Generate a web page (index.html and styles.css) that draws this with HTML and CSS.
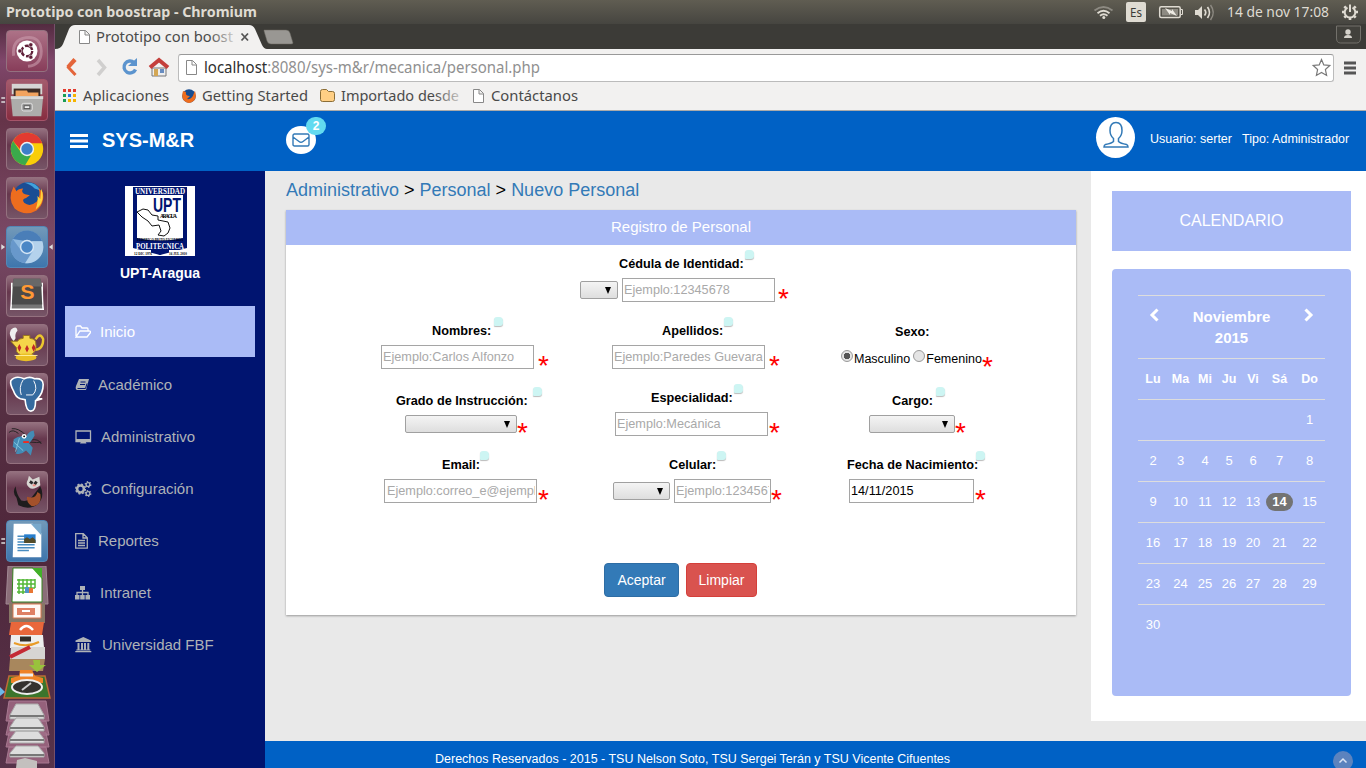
FILE: index.html
```html
<!DOCTYPE html>
<html lang="es">
<head>
<meta charset="utf-8">
<title>Prototipo con boostrap</title>
<link rel="stylesheet" href="styles.css">
</head>
<body>
<header class="topbar">
  <svg class="ui bold" width="260" height="24"><text x="6" y="17" textLength="251" lengthAdjust="spacingAndGlyphs">Prototipo con boostrap - Chromium</text></svg>
  <svg class="tray" width="276" height="24" viewBox="1090 0 276 24">
    <g fill="none" stroke-width="1.8"><path d="M1094.5 10.5q9-7 18 0" stroke="#8d8a82"/><path d="M1097.5 13.2q6-5 12 0M1100 15.8q3.700-3 7.500 0" stroke="#dfdbd2"/></g><circle cx="1103.800" cy="17.500" r="1.500" fill="#dfdbd2"/>
    <rect x="1126" y="2" width="20" height="20" rx="2" fill="#dfdbd2"/><text x="1130" y="17" font-size="13" fill="#3c3b37" textLength="12" lengthAdjust="spacingAndGlyphs">Es</text>
    <rect x="1159.700" y="6.700" width="20.500" height="10.800" rx="1.500" fill="none" stroke="#dfdbd2" stroke-width="1.500"/><path d="M1181 9.500h1.500v5h-1.500" fill="none" stroke="#dfdbd2"/><rect x="1162" y="9" width="16" height="6.500" fill="#8d8a82"/><path d="M1165 8l7 3v-2l5 7-7-3v2z" fill="#eeebe4"/>
    <path d="M1195 10h3l4-4v13l-4-4h-3z" fill="#dfdbd2"/><path d="M1204.500 9.500q2.500 3 0 6M1207.500 7q4 5.500 0 11" fill="none" stroke="#dfdbd2" stroke-width="1.700"/><path d="M1210.500 5q5.500 7.500 0 15" fill="none" stroke="#8d8a82" stroke-width="1.500"/>
    <text x="1227" y="17" fill="#dfdbd2" font-size="15" textLength="102" lengthAdjust="spacingAndGlyphs">14 de nov 17:08</text>
    <g stroke="#dfdbd2" fill="none" stroke-width="2"><path d="M1347.500 7.600a5.300 5.300 0 1 0 5 0M1350 4.500v7.500"/><path d="M1350 17.500v2.500M1342 12h2.500M1355.500 12h2.500M1344.300 6.300l1.800 1.800M1355.700 6.300l-1.800 1.800M1344.300 17.700l1.800-1.800M1355.700 17.700l-1.800-1.800" stroke-width="2.600"/></g>
  </svg>
</header>
<div class="desktop">
<aside class="launcher">
  <svg class="tile wine" viewBox="0 0 42 42"><path d="M7 26Q5 9 20 7t16 14q0 15-14 16" stroke="#c99bab" stroke-width="3" fill="none" opacity=".6"/><circle cx="21" cy="21" r="11" fill="#fff"/><circle cx="21" cy="21" r="5.500" stroke="#5f1f38" stroke-width="2.500" fill="none" stroke-dasharray="9.500 2"/><g fill="#5f1f38" stroke="#fff" stroke-width=".6"><circle cx="13.500" cy="21" r="2.200"/><circle cx="25" cy="14.500" r="2.200"/><circle cx="25" cy="27.500" r="2.200"/></g></svg>
  <svg class="tile red" viewBox="0 0 42 42"><path d="M5 4h32v11H5z" fill="#d6d6d4"/><path d="M7 9h28v8H7z" fill="#3d2c25"/><path d="M9 11h12l1 2h11v5H9z" fill="#f2a35e"/><path d="M4 17h34l-2 21H6z" fill="#adadab"/><path d="M4 17h34v3H4z" fill="#d9d9d7"/><rect x="15.500" y="24.500" width="11" height="8" rx="2" fill="#999" stroke="#e6e6e6"/><rect x="18" y="27" width="6" height="3" fill="#eee" stroke="#555"/><path d="M-6 19h4M-6 23h4" stroke="#ddd" stroke-width="1.600"/></svg>
  <svg class="tile" viewBox="0 0 42 42"><circle cx="21" cy="21" r="17" fill="#f9cd09"/><path d="M6.300 12.500A17 17 0 0 1 37 15H21l-5 9z" fill="#e23a31"/><path d="M6.300 12.500L15 25l10 3-6 10A17 17 0 0 1 6.300 12.500z" fill="#3baa4b"/><circle cx="21" cy="21" r="7.500" fill="#eef3f5"/><circle cx="21" cy="21" r="6" fill="#3d7fc8"/></svg>
  <svg class="tile" viewBox="0 0 42 42"><circle cx="22" cy="20" r="15.500" fill="#1b4d94"/><path d="M18 5q12-2 17 8l-6-2q-5-5-11-6z" fill="#41a2dc"/><path d="M36 10q6 15-5 24-12 7-23-2-8-10-1-23l3 5q2-3 7-3-3 4 2 6l5 1-4 3q-5 1-2 5 6 5 13-1 5-6 2-15l5 6z" fill="#ed6d1e"/><path d="M36 11q5 14-6 22 3-8 2-14l3 3z" fill="#ffd33d"/></svg>
  <svg class="tile blue" viewBox="0 0 42 42"><circle cx="21" cy="21" r="17" fill="#8eb8df"/><path d="M6 12.500A17 17 0 0 1 37 15H21z" fill="#4a7eb8"/><path d="M6 12.500L15 25l10 3-6 10A17 17 0 0 1 6 12.500z" fill="#6898cb"/><path d="M26 15h11a17 17 0 0 1-18 23l8-12z" fill="#b4d2ec"/><circle cx="21" cy="21" r="7.500" fill="#d5e6f5"/><circle cx="21" cy="21" r="6" fill="#4b87c6"/><path d="M-6 18l4 3-4 3zM48 18l-4 3 4 3z" fill="#ddd"/></svg>
  <svg class="tile" viewBox="0 0 42 42"><path d="M5 7q0 20-1 28h34Q37 27 37 7" fill="#777" stroke="#fff" stroke-width="1.600"/><path d="M7 3h28l2 27H5z" fill="#4b4b4b"/><path d="M7 3h28l2 8H6z" fill="#686868"/><text x="14" y="24" font-family="Liberation Sans" font-weight="bold" font-size="21" fill="#ff9934" textLength="15" lengthAdjust="spacingAndGlyphs">S</text></svg>
  <svg class="tile" viewBox="0 0 42 42"><path d="M7 17Q1 11 4 5q6-5 7 1-3 3-2 8z" fill="#eee"/><path d="M30 15q5-8 8 0 0 11-9 11" fill="none" stroke="#ebc62e" stroke-width="2.500"/><path d="M4 17h7q2-3 6-3V11h7v3q4 0 6 3 3 14-9 15Q8 32 10 24z" fill="#f5d54a" stroke="#99771b"/><ellipse cx="20" cy="34" rx="11" ry="4" fill="#eabf25"/><path d="M8 32h24" stroke="#fff1a0"/><g fill="#c12727"><path d="M13 20l2 4-2 4-2-4zM21 21l2 4-2 4-2-4zM28 20l2 4-2 4-2-4z"/></g></svg>
  <svg class="tile" viewBox="0 0 42 42"><path d="M4 7q5-6 14-2 6-3 11 0 9-1 9 6 0 9-6 15h5l-7 2q0 11-5 11t-6-12l-5-1q-5-2-7-8-4-7-3-11z" fill="#356b9f" stroke="#fff" stroke-width="1.700"/><path d="M17 6q-5 8-2 16M28 7q5 9-1 15h-7" fill="none" stroke="#fff"/></svg>
  <svg class="tile" viewBox="0 0 42 42"><path d="M12 11Q6 6 2 10M20 13Q12 5 5 6M25 18q8-2 11 4M24 20q8 1 12 0" fill="none" stroke="#222"/><path d="M7 17q7-5 13-2 2-6 8-7l1 5q-4 7-6 8l4 5-2 8-5-5q-5 5-11 3l2-4-5-3q1-6 1-8z" fill="#438bb5"/><path d="M13 16l-4 14M7 20l10 9" stroke="#83c6df"/><circle cx="18" cy="14" r="2.500" fill="#fff"/><circle cx="18" cy="14" r="1" fill="#000"/><path d="M17 20h6" stroke="#ed2c22" stroke-width="2"/></svg>
  <svg class="tile" viewBox="0 0 42 42"><path d="M9 15q-4 7 1 12l2 8q12 6 21-2 7-8 2-18l-7 9q-5 8-13 6-5-6-6-15z" fill="#1e1c1d"/><path d="M21 26q9 3 11-5l3 2q2 12-9 13-6-4-5-10z" fill="#a4512b"/><path d="M23 4l4 4 7-3 1 9q-8 6-12 2-4-3-1-8z" fill="#d8d6d2"/><path d="M24 10l3 2M31 10l-2 3" stroke="#292929" stroke-width="3"/><path d="M27 14h3" stroke="#ef8a80" stroke-width="2"/></svg>
  <svg class="tile blue" viewBox="0 0 42 42"><path d="M7 3h20l9 10v25H6z" fill="#fff"/><path d="M25 3h11v12z" fill="#79a9cc"/><path d="M11 16h8M11 19h8M11 22h8M11 25h18M11 28h18M11 31h12" stroke="#488cc0" stroke-width="1.500"/><path d="M18 14h12v9H18z" fill="#287ecc"/><path d="M18 23v-4l3-2 3 2 3-2 3 3v3z" fill="#554c29"/><path d="M-6 19h4M-6 23h4" stroke="#ddd" stroke-width="1.600"/></svg>
  <svg class="stack" viewBox="0 566 55 202">
    <path d="M8 566h38l2 38H6z" fill="#8b6e79" stroke="#a28994"/><path d="M13 568h20l9 10v24H12z" fill="#fff" stroke="#37811e"/><path d="M32 568h10v11z" fill="#43b02a"/><g stroke="#54b838" stroke-width="1.500"><path d="M17 580h18M17 584h18M17 588h18M17 592h8M19 579v15M23 579v15M27 579v11M31 579v9M35 579v9"/></g><path d="M25 593v-6h4v6z" fill="#5293c7"/><path d="M29 593v-5h4v5z" fill="#e87735"/>
    <path d="M9 603h36v20H9z" fill="#876"/><path d="M13 604h28v14H13z" fill="#fff8f4" stroke="#d77950"/><path d="M17 608h18v7H17z" fill="#df8064"/><path d="M22 611h8" stroke="#fff" stroke-width="2"/>
    <path d="M11 622h33l-2 13H9z" fill="#e9673b"/><path d="M20 630q6-8 13 0" stroke="#fff" fill="none" stroke-width="2.500"/><path d="M11 635h32l1 13H10z" fill="#eee"/><path d="M20 639h11" stroke="#332d29" stroke-width="5"/><path d="M14 643q13 5 25-1" stroke="#e99b28" stroke-width="2" fill="none"/>
    <path d="M11 647h34v12H10z" fill="#d7d5d2"/><path d="M10 657l20-10" stroke="#c42a34" stroke-width="4"/><path d="M10 659h35l-2 12H9z" fill="#a8875d"/><path d="M33 660h7v5h6l-9 7-8-7h5z" fill="#99c23c"/>
    <path d="M9 676h36l5 22H4z" fill="#3b752c" stroke="#bd6c35" stroke-width="1.500"/><path d="M20 670h12l3 6 8 2v5H11v-5l8-2z" fill="#ef8326"/><path d="M20 675h13" stroke="#eee" stroke-width="3"/><ellipse cx="27" cy="687" rx="15" ry="7" fill="#34312e" stroke="#eee" stroke-width="2"/><path d="M22 690l9-7" stroke="#ccc" stroke-width="2"/><path d="M0 687l5 5-5 4z" fill="#6db9e8"/>
    <g stroke="#aaa"><path d="M9 701h37l3 20H6zM9 721h37l3 14H6zM9 733h37l3 14H6zM9 747h37l3 16H6z" fill="#95617b" stroke="#a87991"/><path d="M16 704h22l6 11v4H10v-4z" fill="#d7d7d7"/><path d="M16 718h22l6 9v4H10v-4zM16 731h22l6 8v4H10v-4zM16 746h22l6 7v4H10v-4z" fill="#ddd"/></g><path d="M10 716h34M10 728h34M10 740h34M10 755h34" stroke="#777" stroke-width="2"/><path d="M17 760l8-2 12 3v7H16z" fill="#c3c0be"/>
  </svg>
</aside>
<main class="browser">
  <div class="tabs">
    <svg class="ui tab" width="245" height="25" viewBox="55 24 245 25"><path d="M55 49q6 0 8-5l6-15q2-4 6-4h174q4 0 6 4l7 16q2 4 5 4z" fill="#f2f1f0"/><path d="M79.500 30.500h6l4 4v9h-10z M85 30.500v4.500h4.500" fill="#fff" stroke="#888"/><text x="96" y="42" fill="url(#f)" textLength="137" lengthAdjust="spacingAndGlyphs">Prototipo con boost</text><path d="M241.500 33.500l6.500 7M248 33.500l-6.500 7" stroke="#555" stroke-width="1.800"/><path d="M264 30h22q3 0 4 3l3 10q0 1-2 1h-20q-3 0-4-3l-3-10z" fill="#999793" stroke="#69675f" stroke-width=".5"/><defs><linearGradient id="f" gradientUnits="userSpaceOnUse" x1="96" x2="237" y1="0" y2="0"><stop offset=".8" stop-color="#494949"/><stop offset="1" stop-color="#e2e1e0"/></linearGradient></defs></svg>
    <svg width="28" height="25" viewBox="1336 24 28 25"><path d="M1336.500 26v12q0 5 4 5h16q4 0 4-5V26z" fill="#42413c" stroke="#73716b"/><circle cx="1348" cy="32" r="2.700" fill="#d6d3cc"/><path d="M1344 38q0-3 4-3t4 3z" fill="#d6d3cc"/></svg>
  </div>
  <div class="toolbar">
    <svg class="nav" width="123" height="37" viewBox="55 49 123 37"><path d="M75.500 60l-7 7.500 7 7.500M74.500 59l-7 8" fill="none" stroke="#e4653a" stroke-width="3"/><path d="M98 60l6.500 7.500-6.500 7.500" fill="none" stroke="#d0cfce" stroke-width="3.500"/><path d="M134 62.500a6 6 0 1 0 1.500 7" fill="none" stroke="#5c94ce" stroke-width="3.400"/><path d="M137 58v8h-9z" fill="#5c94ce"/><path d="M152 68h14v8h-14z" fill="#eee" stroke="#777"/><path d="M150 67.500l9-7.500 9 7.500" fill="none" stroke="#c43f3b" stroke-width="4"/><path d="M154 69h4v7h-4z" fill="#d3a653"/><path d="M160 69h4v4h-4z" fill="#678cc0"/></svg>
    <div class="url"><svg class="ui urltext" width="420" height="26" viewBox="179 55 420 26"><path d="M186.500 60.500h6l4 4v10h-10z M192 60.500v4.500h4.500" fill="#fff" stroke="#888"/><text x="204" y="73" textLength="336" lengthAdjust="spacingAndGlyphs"><tspan fill="#2e2e2e">localhost</tspan><tspan fill="#909090">:8080/sys-m&amp;r/mecanica/personal.php</tspan></text></svg>
    <svg width="22" height="26" viewBox="0 0 22 26"><path d="M10.500 4.500l2.300 5.400 6 .6-4.400 4 1.200 5.900-5.100-3-5.100 3 1.200-5.900-4.400-4 6-.6z" fill="#fff" stroke="#777" stroke-width="1.200"/></svg></div>
    <svg width="14" height="14" class="burger"><path d="M1 2h12M1 7h12M1 12h12" stroke="#555" stroke-width="2.800"/></svg>
  </div>
  <div class="bookmarks">
    <svg class="ui" width="560" height="24" viewBox="55 86 560 24"><g fill="#e33b2e"><path d="M63 89h3v3h-3zM68 89h3v3h-3zM73 89h3v3h-3z"/></g><path d="M63 94h3v3h-3zM63 99h3v3h-3z" fill="#1a9d55"/><path d="M68 94h3v3h-3z" fill="#2c77e5"/><path d="M73 94h3v3h-3zM68 99h3v3h-3zM73 99h3v3h-3z" fill="#f5b400"/>
    <text x="83" y="101" textLength="86" lengthAdjust="spacingAndGlyphs">Aplicaciones</text><circle cx="189" cy="96" r="6.800" fill="#174d91"/><path d="M183 91l3 1q-1 4 4 4l-3 3q5 1 7-6l1-2q3 10-6 12-9-2-6-12z" fill="#ee6c1d"/><text x="202" y="101" textLength="106" lengthAdjust="spacingAndGlyphs">Getting Started</text><path d="M320.500 91.500q0-2 2-2h4l2 2h4q2 0 2 2v6q0 2-2 2h-10q-2 0-2-2z" fill="#ffcf84" stroke="#8b6d36"/><text x="341" y="101" fill="url(#g)" textLength="118" lengthAdjust="spacingAndGlyphs">Importado desde</text><path d="M473.500 89.500h6l4 4v9h-10z M479 89.500v4.500h4.500" fill="#fff" stroke="#888"/><text x="491" y="101" textLength="87" lengthAdjust="spacingAndGlyphs">Contáctanos</text><defs><linearGradient id="g" gradientUnits="userSpaceOnUse" x1="341" x2="465" y1="0" y2="0"><stop offset=".75" stop-color="#494949"/><stop offset="1" stop-color="#e2e1e0"/></linearGradient></defs></svg>
  </div>
  <div class="pagehead">
    <svg class="menu" width="18" height="16"><path d="M0 2.500h18M0 8h18M0 13.500h18" stroke="#fff" stroke-width="3"/></svg><b class="brand">SYS-M&amp;R</b>
    <div class="mail"><svg width="18" height="14"><path d="M2 1h13.500q1.500 0 1.500 1.500v9q0 1.500-1.500 1.500H2.500Q1 13 1 11.500v-9Q1 1 2.500 1M1 4l6 4.500q2 1.500 4 0L17 4" fill="none" stroke="#337ab7" stroke-width="1.400"/></svg><span class="badge">2</span></div>
    <div class="avatar"><svg width="28" height="28"><path d="M14 1.500q-6 0-6 8 0 5 3.500 8v3q-2 2-8 3-1.500.500-1.500 2.500h24q0-2-1.500-2.500-6-1-8-3v-3q3.500-3 3.500-8 0-8-6-8z" fill="none" stroke="#337ab7" stroke-width="1.500"/></svg></div>
    <span class="who">Usuario: serter</span><span class="who role">Tipo: Administrador</span>
  </div>
  <div class="page">
    <nav class="sidebar">
      <svg class="logo" viewBox="0 0 70 70"><path fill="#fff" d="M0 0h70v70H0z"/><path d="M8 1h54v58l-20 6-7 4-7-4-20-6z" fill="#001470"/><path d="M12 9h46v43q-23 5-46 0z" fill="#fff"/><g font-family="Liberation Serif" font-weight="bold"><text x="10" y="7.500" font-size="8" fill="#fff" textLength="50" lengthAdjust="spacingAndGlyphs">UNIVERSIDAD</text><text x="28" y="26" font-size="20" fill="#001470" font-family="Liberation Sans" textLength="28" lengthAdjust="spacingAndGlyphs">UPT</text><text x="35" y="32" font-size="5.500" textLength="17">ARAGUA</text><text x="12" y="55" font-size="5" textLength="46" lengthAdjust="spacingAndGlyphs">FEDERICO BRITO FIGUEROA</text><path d="M8 56h54v6L35 69 8 62z" fill="#001470"/><text x="11" y="63" font-size="8" fill="#fff" textLength="48" lengthAdjust="spacingAndGlyphs">POLITECNICA</text><path d="M8 64h18v6H8zM44 64h19v6H44z" fill="#fff"/><text x="9" y="69" font-size="5" textLength="18" lengthAdjust="spacingAndGlyphs">12 DIC 1976</text><text x="44" y="69" font-size="5" textLength="18" lengthAdjust="spacingAndGlyphs">16 JUL 2010</text></g><path d="M12 26l6-3 5 1 4 5 6 1v4l10 2 2 6-2 5-4 3-6-1 3-4-2-6-7 1-4-5-6-4z" fill="#fff" stroke="#111"/></svg>
      <b class="school">UPT-Aragua</b>
      <a class="item active"><svg width="16" height="14"><path d="M1 11V2.500Q1 1 2.500 1h3L7 3h5q1 0 1 1v2H5L1 12h11l3.500-4.500Q16 6 14 6h-1" class="line"/></svg><span style="margin-left:9px">Inicio</span></a>
      <a class="item"><svg width="15" height="14"><path d="M4 1h10L11 12H2q-2-1-1-4z" class="solid"/><path d="M5.500 4h5M5 6.500h5M2.500 10.500h8l1.500-5" stroke="#001470" fill="none"/></svg><span style="margin-left:8px">Académico</span></a>
      <a class="item"><svg width="17" height="15"><path d="M1 1h14.500v10.500H1z" class="line"/><path d="M1 9h14.500v2.500h-5l1 2H5l1-2H1z" class="solid"/></svg><span style="margin-left:9px">Administrativo</span></a>
      <a class="item"><svg width="17" height="16"><circle cx="5.500" cy="8" r="3.400" class="line" stroke-width="2.500"/><circle cx="5.500" cy="8" r="4.900" class="line" stroke-width="1.400" stroke-dasharray="2 1.850"/><g class="line" stroke-width="1.400"><circle cx="13" cy="3.500" r="1.900"/><circle cx="13" cy="3.500" r="2.800" stroke-dasharray="1.400 1.500"/><circle cx="13" cy="12.500" r="1.900"/><circle cx="13" cy="12.500" r="2.800" stroke-dasharray="1.400 1.500"/></g></svg><span style="margin-left:9px">Configuración</span></a>
      <a class="item"><svg width="13" height="16"><path d="M.7.700h7.600l4 4v10.500H.7zM8 .7V5h4M3 7.500h7M3 10h7M3 12.500h7" class="line"/></svg><span style="margin-left:10px">Reportes</span></a>
      <a class="item"><svg width="15" height="14"><path d="M5 0h5v4H5zM0 9h4.500v4.500H0zM5.200 9h4.500v4.500H5.200zM10.500 9H15v4.500h-4.500z" class="solid"/><path d="M7.500 4v5M2 9V6.500h11V9" class="line"/></svg><span style="margin-left:10px">Intranet</span></a>
      <a class="item"><svg width="17" height="16"><path d="M8.300 0L16 3.500V5H.500V3.500zM2.500 6h2v6.500h-2zM6 6h2v6.500H6zM9 6h2v6.500H9zM12.300 6h2v6.500h-2zM1.300 12.500h14v1h-14zM.3 14h16v1.300H.3z" class="solid"/></svg><span style="margin-left:10px">Universidad FBF</span></a>
    </nav>
    <div class="rest">
      <div class="body">
        <section class="content">
          <div class="crumbs"><a>Administrativo</a> &gt; <a>Personal</a> &gt; <a>Nuevo Personal</a></div>
          <div class="card">
            <div class="cardhead">Registro de Personal</div>
            <form>
              <div class="row"><div class="cell a"></div><div class="cell b"><div class="label" style="padding-left:28px">Cédula de Identidad:<i></i></div><div class="ctl" style="margin-left:-11px"><span class="sel" style="width:38px"></span><input style="width:153px;margin-left:4px" placeholder="Ejemplo:12345678"><em style="margin-left:3px">*</em></div></div></div>
              <div class="row"><div class="cell a"><div class="label" style="padding-left:61px">Nombres:<i style="margin-left:3px"></i></div><div class="ctl" style="margin-left:10px"><input style="width:153px" placeholder="Ejemplo:Carlos Alfonzo"><em style="margin-left:4px">*</em></div></div>
                <div class="cell b"><div class="label" style="padding-left:71px">Apellidos:<i></i></div><div class="ctl" style="margin-left:21px"><input style="width:153px" placeholder="Ejemplo:Paredes Guevara"><em style="margin-left:4px">*</em></div></div>
                <div class="cell c"><div class="label drop1" style="padding-left:74px">Sexo:</div><div class="ctl radios" style="margin-left:20px"><span class="radio on"></span><span>Masculino</span><span class="radio" style="margin-left:3px"></span><span>Femenino</span><em>*</em></div></div></div>
              <div class="row"><div class="cell a"><div class="label drop" style="padding-left:25px">Grado de Instrucción:<i style="margin-left:5px"></i></div><div class="ctl drop" style="margin-left:34px"><span class="sel" style="width:112px"></span><em>*</em></div></div>
                <div class="cell b"><div class="label" style="padding-left:60px">Especialidad:<i></i></div><div class="ctl" style="margin-left:24px"><input style="width:153px" placeholder="Ejemplo:Mecánica"><em style="margin-left:1px">*</em></div></div>
                <div class="cell c"><div class="label drop" style="padding-left:71px">Cargo:<i style="margin-left:3px"></i></div><div class="ctl drop" style="margin-left:48px"><span class="sel" style="width:86px"></span><em>*</em></div></div></div>
              <div class="row"><div class="cell a"><div class="label" style="padding-left:71px">Email:<i style="margin-left:0"></i></div><div class="ctl" style="margin-left:13px"><input style="width:153px;padding-left:2px" placeholder="Ejemplo:correo_e@ejemplo.com"><em style="margin-left:1px">*</em></div></div>
                <div class="cell b"><div class="label" style="padding-left:78px">Celular:<i></i></div><div class="ctl" style="margin-left:22px"><span class="sel" style="width:57px"></span><input style="width:97px;margin-left:4px" placeholder="Ejemplo:1234567"><em style="margin-left:0">*</em></div></div>
                <div class="cell c"><div class="label" style="padding-left:26px">Fecha de Nacimiento:<i style="margin-left:-2px"></i></div><div class="ctl" style="margin-left:28px"><input style="width:125px" value="14/11/2015"><em style="margin-left:1px">*</em></div></div></div>
              <div class="actions"><button type="button" class="btn ok">Aceptar</button><button type="button" class="btn clear">Limpiar</button></div>
            </form>
          </div>
        </section>
        <aside class="right">
          <div class="caltitle">CALENDARIO</div>
          <div class="cal">
            <div class="month"><svg width="11" height="14"><path d="M8.500 1.500L3 7l5.500 5.500" fill="none" stroke="#fff" stroke-width="3"/></svg><b>Noviembre<br>2015</b><svg width="11" height="14"><path d="M2.500 1.500L8 7l-5.500 5.500" fill="none" stroke="#fff" stroke-width="3"/></svg></div>
            <div class="week days"><span>Lu</span><span>Ma</span><span>Mi</span><span>Ju</span><span>Vi</span><span>Sá</span><span>Do</span></div>
            <div class="week"><span></span><span></span><span></span><span></span><span></span><span></span><span>1</span></div>
            <div class="week"><span>2</span><span>3</span><span>4</span><span>5</span><span>6</span><span>7</span><span>8</span></div>
            <div class="week"><span>9</span><span>10</span><span>11</span><span>12</span><span>13</span><span><b class="today">14</b></span><span>15</span></div>
            <div class="week"><span>16</span><span>17</span><span>18</span><span>19</span><span>20</span><span>21</span><span>22</span></div>
            <div class="week"><span>23</span><span>24</span><span>25</span><span>26</span><span>27</span><span>28</span><span>29</span></div>
            <div class="week"><span>30</span></div>
          </div>
        </aside>
      </div>
      <footer><span>Derechos Reservados - 2015 - TSU Nelson Soto, TSU Sergei Terán y TSU Vicente Cifuentes</span><svg width="20" height="17"><circle cx="10" cy="10" r="10" fill="#5c83be"/><path d="M6.500 11.500L10 8l3.500 3.500" fill="none" stroke="#dce5f4" stroke-width="1.500"/></svg></footer>
    </div>
  </div>
</main>
</div>
</body>
</html>
```
FILE: styles.css
```css
* { box-sizing: border-box; }
body { margin: 0; width: 1366px; height: 768px; overflow: hidden; display: flex; flex-direction: column; font: 13px/20px "Liberation Sans", Arial, sans-serif; color: #000; }
svg { display: block; flex: none; }
.topbar { height: 24px; flex: none; display: flex; justify-content: space-between; background: linear-gradient(#605d52, #464540); }
.ui text, .tray text { font-family: "Noto Sans", sans-serif; }
.ui { font-size: 15px; fill: #494949; }
.bold { fill: #dfdbd2; font-weight: bold; font-size: 14px; }
.desktop { display: flex; flex: 1; min-height: 0; }
.launcher { width: 55px; flex: none; padding: 6px 0 0 6px; display: flex; flex-direction: column; gap: 7px; background: linear-gradient(#532b40 0, #80476b 5%, #653449 13%, #7a4966 29%, #573144 47%, #4f273b 70%, #57334a); border-right: 1px solid #76506a; }
.tile { width: 42px; height: 42px; overflow: visible; border-radius: 4px; background: linear-gradient(#94707f, #66374d 40%, #765567); border: 1px solid #94717f; }
.wine { background: linear-gradient(#ad7287, #883d5a); }
.red { background: linear-gradient(#a35c6d, #872d40); border-color: #a65469; }
.blue { background: linear-gradient(#7299b9, #3e76ad); border-color: #5388b7; }
.stack { width: 55px; height: 202px; margin: -3px 0 0 -6px; }
.browser { flex: 1; min-width: 0; display: flex; flex-direction: column; }
.tabs { height: 25px; flex: none; background: #3c3b37; display: flex; justify-content: space-between; padding-right: 2px; }
.toolbar { height: 37px; flex: none; display: flex; background: #f2f1f0; }
.url { width: 1156px; height: 28px; margin-top: 5px; background: #fff; border: 1px solid #bbb; border-top-color: #999; border-radius: 3px; display: flex; justify-content: space-between; }
.urltext { font-size: 16px; }
.burger { margin: 12px 0 0 9px; }
.bookmarks { height: 25px; flex: none; background: #f2f1f0; border-bottom: 1px solid #aaa; }
.pagehead { height: 60px; flex: none; background: #0061c5; display: flex; color: #fff; }
.menu { margin: 22px 0 0 15px; }
.brand { width: 184px; margin: 19px 0 0 14px; font-size: 20px; }
.mail { position: relative; width: 30px; height: 28px; margin-top: 15px; border-radius: 50%; background: #fff; padding: 7px 6px; }
.badge { position: absolute; left: 20px; top: -9px; width: 20px; height: 18px; border-radius: 9px; background: #62daf0; font: bold 12px/18px "Liberation Sans"; text-align: center; }
.avatar { margin: 6px 15px 0 780px; width: 39px; height: 41px; flex: none; border-radius: 50%; background: #fff; padding: 4px 6px; }
.who { font-size: 12.5px; margin-top: 18px; white-space: nowrap; }
.role { margin-left: 10px; }
.page { flex: 1; min-height: 0; display: flex; background: #e9e9e9; }
.sidebar { width: 210px; flex: none; background: #001470; padding: 15px 10px; display: flex; flex-direction: column; color: #aeb2b7; }
.logo { width: 70px; height: 70px; align-self: center; }
.school { color: #fff; font-size: 14px; text-align: center; margin: 7px 0 23px; }
.item { height: 52px; padding-left: 10px; display: flex; align-items: center; font-size: 15px; color: #aeb2b7; }
.active { height: 51px; background: #aabbf6; color: #fff; margin-bottom: 2px; }
.line { fill: none; stroke: currentColor; stroke-width: 1.3; }
.line[stroke-width="2.500"] { stroke-width: 2.5; }
.solid { fill: currentColor; }
.rest { flex: 1; display: flex; flex-direction: column; }
.body { height: 570px; display: flex; }
.content { width: 826px; padding: 9px 15px 0 21px; }
.crumbs { font-size: 18px; }
.crumbs a { color: #337ab7; }
.card { width: 790px; height: 405px; margin-top: 10px; background: #fff; box-shadow: 0 1px 2px rgba(0,0,0,.35); }
.cardhead { height: 35px; background: #aabbf6; color: #fff; font-size: 15px; line-height: 33px; text-align: center; }
.row { height: 67px; display: flex; }
.cell { width: 230px; }
.a { width: 220px; margin-left: 85px; }
.label { height: 33px; padding-top: 9px; display: flex; font-weight: bold; font-size: 12.7px; white-space: nowrap; }
.label i { width: 9px; height: 9px; margin: -4px 0 0 1px; background: #cdf5f3; border-radius: 3px 4px 3px 1px; box-shadow: 0 1px 1px #bbb; }
.ctl { height: 24px; display: flex; align-items: center; white-space: nowrap; }
.drop1 { padding-top: 10px; }
.label.drop { padding-top: 12px; }
.label.drop + .ctl { margin-top: 0; }
input { height: 24px; padding: 1px; margin: 0; border: 1px solid #a5a5a5; font: 12.7px "Liberation Sans"; color: #000; outline: 0; flex: none; }
input::placeholder { color: #a9a9a9; opacity: 1; }
.sel { height: 18px; border: 1px solid #a0a0a0; border-radius: 2px; background: linear-gradient(#f4f4f4, #dedede); display: flex; align-items: center; justify-content: flex-end; padding-right: 6px; }
.sel::after { content: ""; border: 3.5px solid transparent; border-top: 7px solid #000; border-bottom: 0; }
em { font: 28px/24px "Liberation Sans"; color: #f00; height: 24px; margin-top: 17px; width: 11px; }
.radios { padding-top: 3px; font-size: 12.5px; }
.radio { width: 12px; height: 12px; margin: -5px 1px 0 0; border: 1px solid #999; border-radius: 50%; background: #e4e4e4; flex: none; }
.on { background: radial-gradient(#555 0 3px, #e4e4e4 3.5px); }
.actions { display: flex; gap: 7px; padding: 50px 0 0 318px; }
.btn { height: 34px; padding: 0; color: #fff; font: 14px "Liberation Sans"; border-radius: 4px; border: 1px solid; }
.ok { width: 75px; background: #337ab7; border-color: #2e6da4; }
.clear { width: 71px; background: #d9534f; border-color: #d43f3a; }
.right { width: 275px; height: 550px; background: #fff; padding: 20px 15px 0 21px; color: #fff; }
.caltitle { height: 60px; background: #aabbf6; text-align: center; font-size: 16px; line-height: 59px; }
.cal { height: 427px; margin-top: 18px; border-radius: 4px; background: #aabbf6; padding: 26px; }
.month { height: 63px; border-top: 1px solid #ddd; padding: 10px 11px; display: flex; justify-content: space-between; text-align: center; font-size: 15px; line-height: 21px; }
.month svg { margin-top: 2px; }
.week { height: 41px; border-top: 1px solid #ddd; display: grid; grid-template-columns: 30px 25px 24px 24px 24px 29px 31px; text-align: center; line-height: 40px; font-size: 13px; }
.days { font-weight: bold; font-size: 12.5px; }
.today { display: inline-block; width: 27px; line-height: 18px; border-radius: 9px; background: #737373; }
footer { height: 27px; margin-top: auto; background: #0061c5; color: #fff; font-size: 12.5px; line-height: 37px; padding: 0 13px 0 170px; display: flex; justify-content: space-between; align-items: flex-end; }
footer span { height: 27px; }
```
